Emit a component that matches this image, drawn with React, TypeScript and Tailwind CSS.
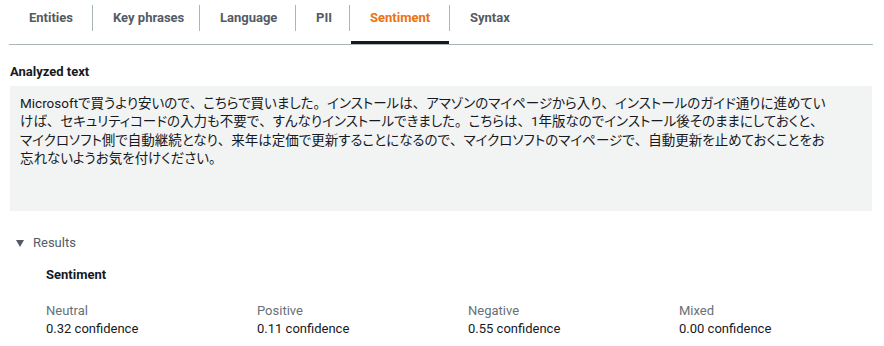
import React from "react";

const tabs = [
  { label: "Entities", w: "w-[83px]", first: true },
  { label: "Key phrases", w: "w-[107px]" },
  { label: "Language", w: "w-[96px]" },
  { label: "PII", w: "w-[54px]" },
  { label: "Sentiment", w: "w-[100px]", active: true },
  { label: "Syntax", w: "w-[90px]" },
];

const lines = [
  "Microsoftで買うより安いので、こちらで買いました。インストールは、アマゾンのマイページから入り、インストールのガイド通りに進めてい",
  "けば、セキュリティコードの入力も不要で、すんなりインストールできました。こちらは、1年版なのでインストール後そのままにしておくと、",
  "マイクロソフト側で自動継続となり、来年は定価で更新することになるので、マイクロソフトのマイページで、自動更新を止めておくことをお",
  "忘れないようお気を付けください。",
];

const scores = [
  { name: "Neutral", value: "0.32" },
  { name: "Positive", value: "0.11" },
  { name: "Negative", value: "0.55" },
  { name: "Mixed", value: "0.00" },
];

// keep 、 and 。 full width while kana use proportional widths
const renderLine = (line: string) =>
  line.split(/([、。])/).map((part, i) =>
    part === "、" || part === "。" ? (
      <span key={i} className="[font-feature-settings:normal]">
        {part}
      </span>
    ) : (
      <span key={i}>{part}</span>
    )
  );

export default function App() {
  return (
    <div className="w-[884px] h-[346px] bg-white text-[13px] text-[#16191f] font-[Roboto,'Noto_Sans_CJK_JP',sans-serif] overflow-hidden">
      {/* Tabs */}
      <div className="ml-[9px] mr-[11px] flex border-b border-[#aab7b8]">
        {tabs.map((tab) => (
          <div key={tab.label} className={`${tab.w} shrink-0 flex flex-col pt-[5px]`}>
            <div
              className={`h-[26px] flex items-center px-5 font-bold whitespace-nowrap ${
                tab.first ? "" : "border-l border-[#aab7b8]"
              } ${tab.active ? "text-[#ec7211]" : "text-[#545b64]"}`}
            >
              {tab.label}
            </div>
            <div className="h-[10px]" />
            <div className={`h-[3px] ${tab.active ? "bg-[#16191f] ml-[2px]" : ""}`} />
          </div>
        ))}
      </div>

      {/* Analyzed text */}
      <div className="px-[10px] pr-[12px] mt-[18px]">
        <div className="font-bold leading-[18px]">Analyzed text</div>
        <div className="mt-[5px] h-[125px] bg-[#f2f3f3] px-[10px] pt-[8px] text-[13.5px] leading-[18.3px] [font-feature-settings:'palt']">
          {lines.map((line, i) => (
            <div key={i} className="whitespace-nowrap">
              {renderLine(line)}
            </div>
          ))}
        </div>
      </div>

      {/* Results */}
      <div className="mt-[23px] pl-[16px]">
        <div className="flex items-center gap-[9px] leading-[18px] text-[#545b64]">
          <svg width="8" height="7" viewBox="0 0 8 7" className="shrink-0">
            <path d="M0 0 H8 L4 7 Z" fill="#545b64" />
          </svg>
          <span>Results</span>
        </div>
        <div className="pl-[30px]">
          <div className="mt-[14px] font-bold leading-[18px]">Sentiment</div>
          <div className="mt-[18px] flex">
            {scores.map((s) => (
              <div key={s.name} className="w-[211px] shrink-0 leading-[18.4px]">
                <div className="text-[#687078]">{s.name}</div>
                <div>{s.value} confidence</div>
              </div>
            ))}
          </div>
        </div>
      </div>
    </div>
  );
}
